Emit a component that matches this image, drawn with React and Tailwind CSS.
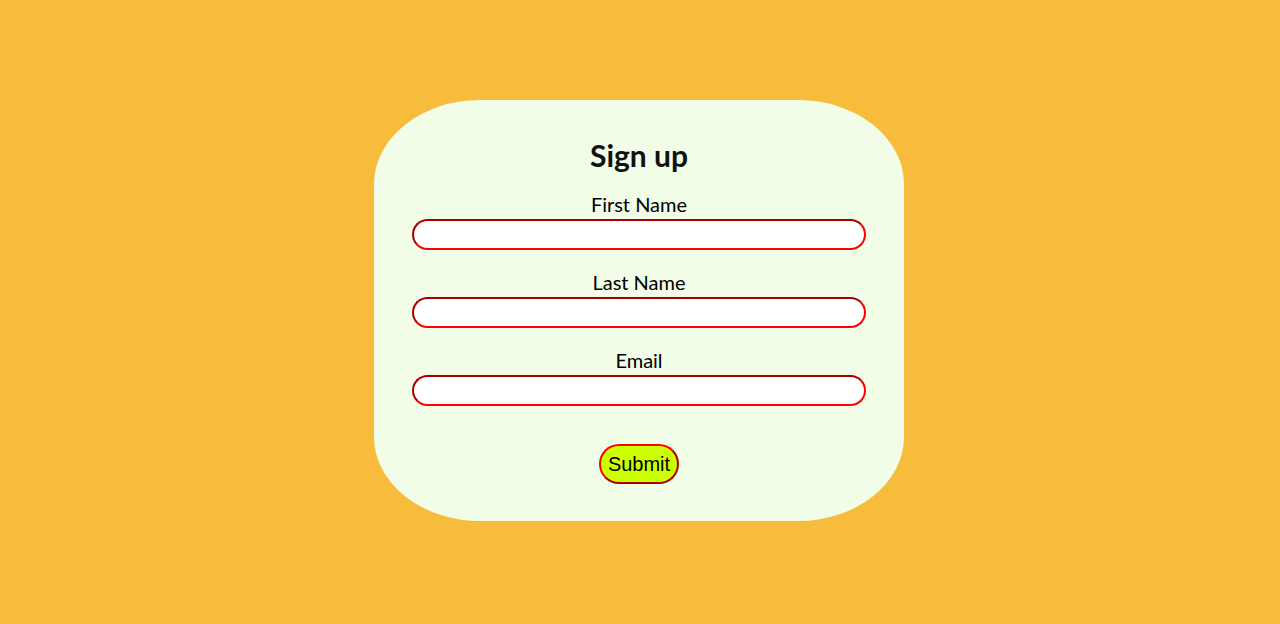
import React, { useState } from 'react';

const Field = ({ label, value, onChange, first }) => (
    <div className={`flex flex-col items-center w-full ${first ? 'mt-[19px]' : 'mt-5'}`}>
        <label className="text-[20px] leading-[24px] text-black">{label}</label>
        <input
            type="text"
            value={value}
            onChange={e => onChange(e.target.value)}
            className="mt-[3px] w-[454px] h-[31px] rounded-full bg-white border-2 border-[red] [border-style:inset] px-3 outline-none"
        />
    </div>
);

export default function App() {
    const [form, setForm] = useState({ first: '', last: '', email: '' });
    const set = key => val => setForm({ ...form, [key]: val });

    return (
        <div className="min-h-screen h-[624px] bg-[#f7bc3c] flex flex-col items-center pt-[100px] font-['Lato','Liberation_Sans',sans-serif]">
            {/* Card */}
            <form
                onSubmit={e => e.preventDefault()}
                className="mr-[2px] w-[530px] h-[421px] rounded-[20%] bg-[#f1fde7] flex flex-col items-center pt-[37px]"
            >
                <h1 className="text-[30px] leading-[36px] font-bold text-[#111]">Sign up</h1>
                <Field label="First Name" value={form.first} onChange={set('first')} first />
                <Field label="Last Name" value={form.last} onChange={set('last')} />
                <Field label="Email" value={form.email} onChange={set('email')} />
                <button
                    type="submit"
                    className="mt-[38px] h-[40px] px-[7px] rounded-full bg-[#ccff00] border-2 border-[red] [border-style:outset] text-[20px] leading-[23px] text-black font-['Liberation_Sans',Arial,sans-serif]"
                >
                    Submit
                </button>
            </form>
        </div>
    );
}
